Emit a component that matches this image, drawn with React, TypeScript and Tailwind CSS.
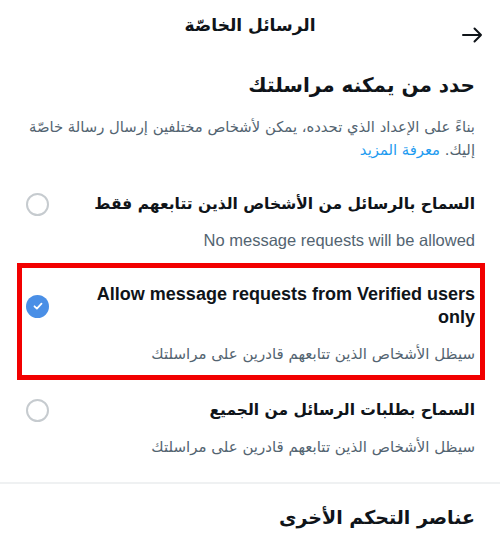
import React from 'react';

const font = { fontFamily: '"DejaVu Sans", "Liberation Sans", sans-serif' };
const latin = { fontFamily: '"Liberation Sans", Arial, sans-serif' };

function Radio({ checked }: { checked?: boolean }) {
  if (checked) {
    return (
      <div className="w-[23px] h-[23px] rounded-full bg-[#4a8fe6] flex items-center justify-center shrink-0">
        <svg width="12" height="12" viewBox="0 0 12 12" fill="none">
          <path d="M2.5 6.3l2.4 2.3 4.6-5" stroke="white" strokeWidth="1.8" strokeLinecap="round" strokeLinejoin="round" />
        </svg>
      </div>
    );
  }
  return <div className="w-[23px] h-[23px] rounded-full border-2 border-[#c6cbcf] shrink-0" />;
}

interface OptionProps {
  title: string;
  subtitle: string;
  checked?: boolean;
  english?: boolean;
  englishSub?: boolean;
}

function Option({ title, subtitle, checked, english, englishSub }: OptionProps) {
  return (
    <div>
      <div className="flex items-center gap-[24px]">
        <div
          className={
            english
              ? 'flex-1 text-[18px] leading-[23px] font-bold text-[#0f1419]'
              : 'flex-1 text-[15.5px] leading-[24px] font-bold text-[#0f1419]'
          }
          style={english ? latin : undefined}
        >
          {title}
        </div>
        <Radio checked={checked} />
      </div>
      <div
        className={
          englishSub
            ? 'mt-[13px] text-[16.5px] leading-[22px] text-[#536471]'
            : 'mt-[14px] text-[15px] leading-[22px] text-[#536471]'
        }
        style={englishSub ? latin : undefined}
      >
        {subtitle}
      </div>
    </div>
  );
}

export default function App() {
  return (
    <div dir="rtl" className="relative w-[500px] h-[544px] bg-white overflow-hidden" style={font}>
      {/* header */}
      <div className="grid grid-cols-[60px_1fr_60px] h-[62px]">
        <div className="flex justify-start pr-[16px] pt-[24px]">
          <svg width="24" height="22" viewBox="0 0 24 22" fill="none">
            <path d="M3 11h18M14.5 4.5L21 11l-6.5 6.5" stroke="#0f1419" strokeWidth="2" strokeLinecap="round" strokeLinejoin="round" />
          </svg>
        </div>
        <div className="pt-[12px] text-center text-[17px] leading-[26px] font-bold text-[#0f1419]">
          الرسائل الخاصّة
        </div>
        <div />
      </div>

      <div className="px-[25px]">
        <h1 className="mt-[7px] text-[20px] leading-[32px] font-bold text-[#0f1419]">حدد من يمكنه مراسلتك</h1>
        <p className="mt-[14px] text-[14.8px] leading-[23px] text-[#536471]">
          بناءً على الإعداد الذي تحدده، يمكن لأشخاص مختلفين إرسال رسالة خاصّة
          <br />
          إليك. <span className="text-[#1d9bf0]">معرفة المزيد</span>
        </p>
      </div>

      <div className="pr-[25px] pl-[26px]">
        <div className="mt-[31px]">
          <Option
            englishSub
            title="السماح بالرسائل من الأشخاص الذين تتابعهم فقط"
            subtitle="No message requests will be allowed"
          />
        </div>
        <div className="mt-[32px]">
          <Option
            english
            checked
            title="Allow message requests from Verified users only"
            subtitle="سيظل الأشخاص الذين تتابعهم قادرين على مراسلتك"
          />
        </div>
        <div className="mt-[33px]">
          <Option
            title="السماح بطلبات الرسائل من الجميع"
            subtitle="سيظل الأشخاص الذين تتابعهم قادرين على مراسلتك"
          />
        </div>
      </div>

      <div className="mt-[24px] h-[2px] bg-[#eff1f2]" />

      <div className="px-[25px]">
        <h2 className="mt-[17px] text-[19px] leading-[32px] font-bold text-[#0f1419]">عناصر التحكم الأخرى</h2>
      </div>

      {/* annotation box drawn over the selected option */}
      <div className="absolute left-[17px] top-[263px] w-[468px] h-[117px] border-[5px] border-[#f20000] pointer-events-none" />
    </div>
  );
}
